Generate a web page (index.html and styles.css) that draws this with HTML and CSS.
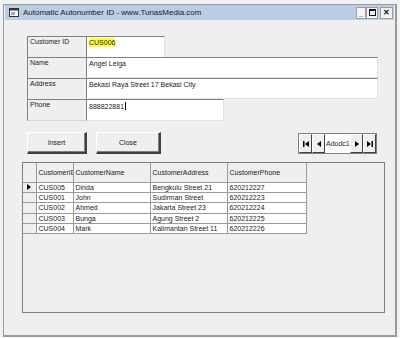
FILE: index.html
```html
<!DOCTYPE html>
<html lang="en">
<head>
  <meta charset="UTF-8">
  <title>Automatic Autonumber ID</title>
  <link rel="stylesheet" href="styles.css">
</head>
<body>
  <div class="window">
    <div class="titlebar">
      <svg class="app-icon" viewBox="0 0 10 9" width="10" height="9">
        <rect x="0.5" y="0.5" width="9" height="8" fill="#fff" stroke="#333"/>
        <rect x="0.5" y="0.5" width="9" height="2" fill="#333"/>
        <rect x="2" y="4" width="4" height="3" fill="#9ab"/>
      </svg>
      <span class="title-text">Automatic Autonumber ID - www.TunasMedia.com</span>
      <div class="win-buttons">
        <span class="win-btn min">_</span>
        <span class="win-btn max"><i></i></span>
        <span class="win-btn close">&#x2715;</span>
      </div>
    </div>

    <div class="form-area">
      <div class="field-row">
        <div class="field-label">Customer ID</div>
        <div class="field-input w-id"><span class="highlight">CUS006</span></div>
      </div>
      <div class="field-row">
        <div class="field-label">Name</div>
        <div class="field-input w-wide">Angel Lelga</div>
      </div>
      <div class="field-row">
        <div class="field-label">Address</div>
        <div class="field-input w-wide">Bekasi Raya Street 17 Bekasi City</div>
      </div>
      <div class="field-row last">
        <div class="field-label">Phone</div>
        <div class="field-input w-phone">888822881<span class="caret"></span></div>
      </div>

      <div class="button-row">
        <button class="cmd insert">Insert</button>
        <button class="cmd close-cmd">Close</button>
        <div class="adodc">
          <span class="nav-btn">
            <svg viewBox="0 0 8 8" width="8" height="8"><rect x="1" y="1" width="1.5" height="6" fill="#000"/><polygon points="7,1 3,4 7,7" fill="#000"/></svg>
          </span>
          <span class="nav-btn">
            <svg viewBox="0 0 8 8" width="8" height="8"><polygon points="6,1 2,4 6,7" fill="#000"/></svg>
          </span>
          <span class="adodc-caption">Adodc1</span>
          <span class="nav-btn">
            <svg viewBox="0 0 8 8" width="8" height="8"><polygon points="2,1 6,4 2,7" fill="#000"/></svg>
          </span>
          <span class="nav-btn">
            <svg viewBox="0 0 8 8" width="8" height="8"><polygon points="1,1 5,4 1,7" fill="#000"/><rect x="5.5" y="1" width="1.5" height="6" fill="#000"/></svg>
          </span>
        </div>
      </div>
    </div>

    <div class="grid-box">
      <table class="data-grid">
        <thead>
          <tr>
            <th class="sel"></th>
            <th class="c-id">CustomerID</th>
            <th class="c-name">CustomerName</th>
            <th class="c-addr">CustomerAddress</th>
            <th class="c-phone">CustomerPhone</th>
          </tr>
        </thead>
        <tbody>
          <tr>
            <td class="sel"><span class="pointer"></span></td>
            <td>CUS005</td><td>Dinda</td><td>Bengkulu Street 21</td><td>620212227</td>
          </tr>
          <tr>
            <td class="sel"></td>
            <td>CUS001</td><td>John</td><td>Sudirman Street</td><td>620212223</td>
          </tr>
          <tr>
            <td class="sel"></td>
            <td>CUS002</td><td>Ahmed</td><td>Jakarta Street 23</td><td>620212224</td>
          </tr>
          <tr>
            <td class="sel"></td>
            <td>CUS003</td><td>Bunga</td><td>Agung Street 2</td><td>620212225</td>
          </tr>
          <tr>
            <td class="sel"></td>
            <td>CUS004</td><td>Mark</td><td>Kalimantan Street 11</td><td>620212226</td>
          </tr>
        </tbody>
      </table>
    </div>
  </div>
</body>
</html>
```

FILE: styles.css
```css
:root {
  --face: #efefef;
  --shadow: #808080;
  --dark: #404040;
  --title-bg: #b9cee6;
  --text: #222;
  --font: 'Liberation Sans', Arial, sans-serif;
}

* {
  box-sizing: border-box;
  margin: 0;
  padding: 0;
}

html,
body {
  width: 400px;
  height: 338px;
  overflow: hidden;
}

body {
  background-color: #f2f2f2;
  font-family: var(--font);
  font-size: 7px;
  color: var(--text);
}

.window {
  margin: 4px 3px 0 3px;
  width: 394px;
  height: 333px;
  background-color: var(--face);
  border: 1px solid #9a9a9a;
  border-right: 2px solid #9a9a9a;
  border-bottom: 2px solid #9a9a9a;
}

/* Title bar */
.titlebar {
  display: flex;
  align-items: center;
  height: 15px;
  margin: 0 1px;
  background-color: var(--title-bg);
}

.app-icon {
  margin-left: 4px;
  margin-right: 4px;
}

.title-text {
  font-size: 8px;
  color: #1a1a1a;
}

.win-buttons {
  display: flex;
  margin-left: auto;
  margin-right: 1px;
}

.win-btn {
  display: flex;
  align-items: center;
  justify-content: center;
  height: 12px;
  background-color: #f4f4f4;
  border: 1px solid #a0a0a0;
  font-size: 8px;
  color: #111;
}

.win-btn.min {
  width: 10px;
  align-items: flex-end;
  line-height: 9px;
  font-weight: bold;
}

.win-btn.max {
  width: 12px;
}

.win-btn.max i {
  display: block;
  width: 7px;
  height: 7px;
  border: 1px solid #111;
  border-top-width: 2px;
}

.win-btn.close {
  width: 13px;
  margin-left: 2px;
  font-weight: bold;
}

/* Form fields */
.form-area {
  margin: 16px 0 0 23px;
  width: 351px;
}

.field-row {
  display: flex;
  height: 21px;
}

.field-row.last {
  height: 22px;
}

.field-label {
  width: 59px;
  padding: 1px 2px;
  border-top: 1px solid var(--shadow);
  border-left: 1px solid var(--shadow);
  background-color: var(--face);
}

.field-row.last .field-label {
  border-bottom: 1px solid #d8d8d8;
}

.field-input {
  padding: 2px 2px;
  background-color: #fff;
  border-top: 1px solid var(--shadow);
  border-left: 1px solid var(--shadow);
  border-right: 1px solid #e2e2e2;
  border-bottom: 1px solid #e2e2e2;
  white-space: nowrap;
}

.w-id {
  width: 79px;
  border-bottom: none;
}

.w-wide {
  width: 292px;
}

.w-phone {
  width: 138px;
}

.highlight {
  background-color: #ffff3a;
  padding: 1px 0;
}

.caret {
  display: inline-block;
  width: 1px;
  height: 8px;
  margin-left: 1px;
  vertical-align: -1px;
  background-color: #000;
}

/* Command buttons */
.button-row {
  display: flex;
  align-items: flex-start;
  margin-top: 11px;
}

.cmd {
  height: 22px;
  font-family: var(--font);
  font-size: 7px;
  color: var(--text);
  background-color: var(--face);
  border-top: 1px solid #fff;
  border-left: 1px solid #fff;
  border-right: 2px solid var(--dark);
  border-bottom: 2px solid var(--dark);
  box-shadow: inset -1px -1px 0 var(--shadow);
}

.insert {
  width: 60px;
}

.close-cmd {
  width: 65px;
  margin-left: 9px;
}

/* Data control */
.adodc {
  display: flex;
  align-items: stretch;
  height: 21px;
  width: 79px;
  margin-left: auto;
  margin-right: 1px;
  margin-top: 1px;
  border: 1px solid var(--shadow);
  background-color: #fff;
}

.nav-btn {
  display: flex;
  align-items: center;
  justify-content: center;
  width: 13px;
  background-color: var(--face);
  border-top: 1px solid #fff;
  border-left: 1px solid #fff;
  border-right: 1px solid var(--dark);
  border-bottom: 1px solid var(--dark);
}

.adodc-caption {
  width: 25px;
  overflow: hidden;
  white-space: nowrap;
  padding-left: 1px;
  line-height: 19px;
}

/* Data grid */
.grid-box {
  margin: 8px 0 0 18px;
  width: 363px;
  height: 151px;
  border: 1px solid var(--shadow);
  background-color: var(--face);
}

.data-grid {
  border-collapse: collapse;
  table-layout: fixed;
  width: 283px;
}

.data-grid th,
.data-grid td {
  height: 10.4px;
  padding: 0 2px;
  border: 1px solid #9a9a9a;
  text-align: left;
  font-weight: normal;
  white-space: nowrap;
  overflow: hidden;
  line-height: 9px;
}

.data-grid th {
  height: 19px;
  background-color: var(--face);
  border-top: none;
}

.data-grid th:first-child,
.data-grid td:first-child {
  border-left: none;
}

.data-grid td {
  background-color: #fff;
}

.data-grid td.sel,
.data-grid th.sel {
  background-color: var(--face);
  width: 13px;
  padding: 0;
}

.c-id {
  width: 37px;
}

.c-name {
  width: 77px;
}

.c-addr {
  width: 77px;
}

.c-phone {
  width: 79px;
}

.pointer {
  display: block;
  margin-left: 4px;
  width: 0;
  height: 0;
  border-top: 3px solid transparent;
  border-bottom: 3px solid transparent;
  border-left: 4px solid #000;
}
```
